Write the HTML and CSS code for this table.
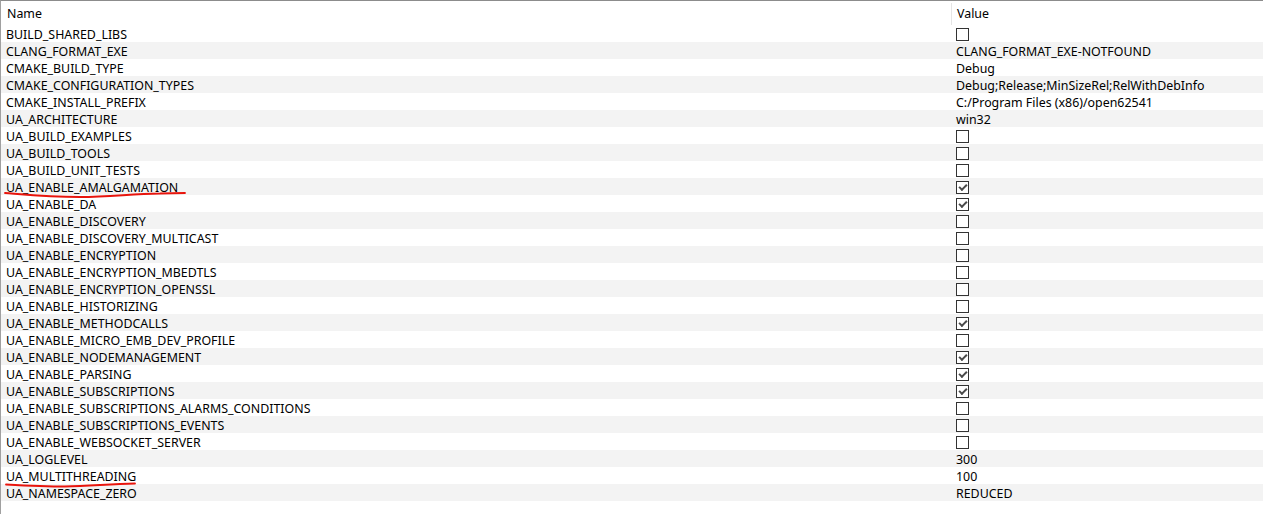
FILE: index.html
```html
<!DOCTYPE html>
<html>
<head>
<meta charset="utf-8">
<link rel="stylesheet" href="styles.css">
</head>
<body>
<div class="view">
  <div class="header">
    <div class="hcell name">Name</div>
    <div class="hcell value">Value</div>
  </div>
  <div class="rows">
    <div class="row"><div class="cell name">BUILD_SHARED_LIBS</div><div class="cell value"><span class="cb"></span></div></div>
    <div class="row"><div class="cell name">CLANG_FORMAT_EXE</div><div class="cell value">CLANG_FORMAT_EXE-NOTFOUND</div></div>
    <div class="row"><div class="cell name">CMAKE_BUILD_TYPE</div><div class="cell value">Debug</div></div>
    <div class="row"><div class="cell name">CMAKE_CONFIGURATION_TYPES</div><div class="cell value">Debug;Release;MinSizeRel;RelWithDebInfo</div></div>
    <div class="row"><div class="cell name">CMAKE_INSTALL_PREFIX</div><div class="cell value">C:/Program Files (x86)/open62541</div></div>
    <div class="row"><div class="cell name">UA_ARCHITECTURE</div><div class="cell value">win32</div></div>
    <div class="row"><div class="cell name">UA_BUILD_EXAMPLES</div><div class="cell value"><span class="cb"></span></div></div>
    <div class="row"><div class="cell name">UA_BUILD_TOOLS</div><div class="cell value"><span class="cb"></span></div></div>
    <div class="row"><div class="cell name">UA_BUILD_UNIT_TESTS</div><div class="cell value"><span class="cb"></span></div></div>
    <div class="row"><div class="cell name">UA_ENABLE_AMALGAMATION</div><div class="cell value"><span class="cb checked"></span></div></div>
    <div class="row"><div class="cell name">UA_ENABLE_DA</div><div class="cell value"><span class="cb checked"></span></div></div>
    <div class="row"><div class="cell name">UA_ENABLE_DISCOVERY</div><div class="cell value"><span class="cb"></span></div></div>
    <div class="row"><div class="cell name">UA_ENABLE_DISCOVERY_MULTICAST</div><div class="cell value"><span class="cb"></span></div></div>
    <div class="row"><div class="cell name">UA_ENABLE_ENCRYPTION</div><div class="cell value"><span class="cb"></span></div></div>
    <div class="row"><div class="cell name">UA_ENABLE_ENCRYPTION_MBEDTLS</div><div class="cell value"><span class="cb"></span></div></div>
    <div class="row"><div class="cell name">UA_ENABLE_ENCRYPTION_OPENSSL</div><div class="cell value"><span class="cb"></span></div></div>
    <div class="row"><div class="cell name">UA_ENABLE_HISTORIZING</div><div class="cell value"><span class="cb"></span></div></div>
    <div class="row"><div class="cell name">UA_ENABLE_METHODCALLS</div><div class="cell value"><span class="cb checked"></span></div></div>
    <div class="row"><div class="cell name">UA_ENABLE_MICRO_EMB_DEV_PROFILE</div><div class="cell value"><span class="cb"></span></div></div>
    <div class="row"><div class="cell name">UA_ENABLE_NODEMANAGEMENT</div><div class="cell value"><span class="cb checked"></span></div></div>
    <div class="row"><div class="cell name">UA_ENABLE_PARSING</div><div class="cell value"><span class="cb checked"></span></div></div>
    <div class="row"><div class="cell name">UA_ENABLE_SUBSCRIPTIONS</div><div class="cell value"><span class="cb checked"></span></div></div>
    <div class="row"><div class="cell name">UA_ENABLE_SUBSCRIPTIONS_ALARMS_CONDITIONS</div><div class="cell value"><span class="cb"></span></div></div>
    <div class="row"><div class="cell name">UA_ENABLE_SUBSCRIPTIONS_EVENTS</div><div class="cell value"><span class="cb"></span></div></div>
    <div class="row"><div class="cell name">UA_ENABLE_WEBSOCKET_SERVER</div><div class="cell value"><span class="cb"></span></div></div>
    <div class="row"><div class="cell name">UA_LOGLEVEL</div><div class="cell value">300</div></div>
    <div class="row"><div class="cell name">UA_MULTITHREADING</div><div class="cell value">100</div></div>
    <div class="row"><div class="cell name">UA_NAMESPACE_ZERO</div><div class="cell value">REDUCED</div></div>
  </div>
  <svg class="marks" width="1263" height="514" viewBox="0 0 1263 514">
    <path d="M5 193 C 30 195, 50 197, 80 197 C 110 197, 130 194, 160 193.5 C 172 193, 180 193, 185 193" />
    <path d="M6 484.5 C 25 485.5, 45 486.5, 65 486.5 C 90 486, 110 484, 135 483.5" />
  </svg>
</div>
</body>
</html>
```
FILE: styles.css
```css
html, body {
  margin: 0;
  padding: 0;
  background: #ffffff;
}
body {
  font-family: "Segoe UI", "Noto Sans", "Liberation Sans", sans-serif;
  font-size: 12.4px;
  color: #000;
}
.view {
  position: relative;
  width: 1263px;
  height: 514px;
  box-sizing: border-box;
  border-top: 1px solid #8c8c8c;
  border-left: 1px solid #a0a0a0;
  overflow: hidden;
}
.header {
  display: grid;
  grid-template-columns: 951px 1fr;
  height: 24px;
}
.hcell {
  margin-top: 2px;
  line-height: 22px;
}
.hcell.name {
  padding-left: 6px;
  border-right: 1px solid #e5e5e5;
}
.hcell.value {
  padding-left: 5px;
}
.rows {
  display: flex;
  flex-direction: column;
}
.row {
  display: grid;
  grid-template-columns: 954px 1fr;
  height: 17px;
}
.row:nth-child(even) {
  background: #f3f3f3;
}
.cell {
  padding-top: 2px;
  height: 15px;
  line-height: 16px;
  white-space: nowrap;
}
.cell.name {
  padding-left: 5px;
}
.cell.value {
  padding-left: 1px;
}
.cb {
  display: inline-block;
  box-sizing: border-box;
  width: 13px;
  height: 13px;
  border: 1px solid #333;
  background: #fff;
  position: relative;
  vertical-align: top;
  margin-top: 1px;
}
.cb.checked::after {
  content: "";
  position: absolute;
  left: 2px;
  top: 2px;
  width: 6px;
  height: 3px;
  border-left: 2px solid #4a4a4a;
  border-bottom: 2px solid #4a4a4a;
  transform: rotate(-45deg);
}
.marks {
  position: absolute;
  left: -1px;
  top: -1px;
  pointer-events: none;
}
.marks path {
  fill: none;
  stroke: #e8140c;
  stroke-width: 1.8;
  stroke-linecap: round;
}
```
